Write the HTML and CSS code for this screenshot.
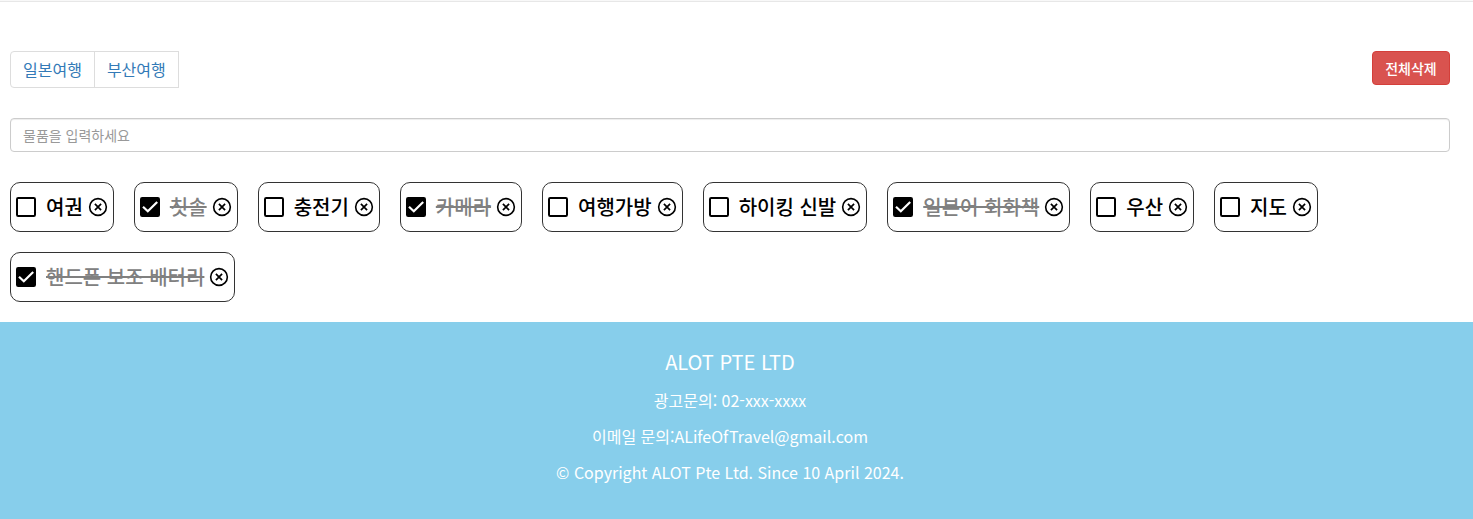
FILE: index.html
```html
<!DOCTYPE html>
<html lang="ko">
<head>
<meta charset="utf-8">
<title>ALOT</title>
<link rel="stylesheet" href="styles.css">
</head>
<body>
<svg class="defs" width="0" height="0">
<symbol id="box" viewBox="0 0 20 20"><rect x="1" y="1" width="18" height="18" rx="1.200" fill="none" stroke="#000" stroke-width="2"/></symbol>
<symbol id="checked" viewBox="0 0 20 20"><rect width="20" height="20" rx="2.200"/><path d="M3 9.800L7.800 14.300L17.200 5" fill="none" stroke="#fff" stroke-width="2.200"/></symbol>
<symbol id="remove" viewBox="0 0 20 20"><circle cx="10" cy="10" r="8.350" fill="none" stroke="#000" stroke-width="1.600"/><path d="M6.900 6.900l6.200 6.200M13.100 6.900l-6.200 6.200" fill="none" stroke="#000" stroke-width="1.700"/></symbol>
</svg>
<header class="top-line"></header>
<main class="content">
<div class="toolbar">
<nav class="tabs"><a class="tab">일본여행</a><a class="tab">부산여행</a></nav>
<button class="delete-all">전체삭제</button>
</div>
<input class="item-input" type="text" placeholder="물품을 입력하세요">
<ul class="items">
<li class="item"><svg class="check"><use href="#box"/></svg><span class="label">여권</span><svg class="remove"><use href="#remove"/></svg></li>
<li class="item done"><svg class="check"><use href="#checked"/></svg><span class="label">칫솔</span><svg class="remove"><use href="#remove"/></svg></li>
<li class="item"><svg class="check"><use href="#box"/></svg><span class="label">충전기</span><svg class="remove"><use href="#remove"/></svg></li>
<li class="item done"><svg class="check"><use href="#checked"/></svg><span class="label">카메라</span><svg class="remove"><use href="#remove"/></svg></li>
<li class="item"><svg class="check"><use href="#box"/></svg><span class="label">여행가방</span><svg class="remove"><use href="#remove"/></svg></li>
<li class="item"><svg class="check"><use href="#box"/></svg><span class="label">하이킹 신발</span><svg class="remove"><use href="#remove"/></svg></li>
<li class="item done"><svg class="check"><use href="#checked"/></svg><span class="label">일본어 회화책</span><svg class="remove"><use href="#remove"/></svg></li>
<li class="item"><svg class="check"><use href="#box"/></svg><span class="label">우산</span><svg class="remove"><use href="#remove"/></svg></li>
<li class="item"><svg class="check"><use href="#box"/></svg><span class="label">지도</span><svg class="remove"><use href="#remove"/></svg></li>
<li class="item done"><svg class="check"><use href="#checked"/></svg><span class="label">핸드폰 보조 배터리</span><svg class="remove"><use href="#remove"/></svg></li>
</ul>
</main>
<footer class="footer">
<h2 class="company">ALOT PTE LTD</h2>
<p class="line">광고문의: 02-xxx-xxxx</p>
<p class="line">이메일 문의:ALifeOfTravel@gmail.com</p>
<p class="line">© Copyright ALOT Pte Ltd. Since 10 April 2024.</p>
</footer>
</body>
</html>
```
FILE: styles.css
```css
* { box-sizing: border-box; }
body { margin: 0; font-family: "Noto Sans CJK KR", sans-serif; background: #fff; color: #000; height: 519px; display: flex; flex-direction: column; overflow: hidden; }
.defs { display: none; }
.top-line { height: 2px; flex: none; background: #f8f8f8; border-bottom: 1px solid #e7e7e7; }
.content { padding: 49px 23px 20px 10px; }
.toolbar { display: flex; justify-content: space-between; align-items: flex-start; height: 67px; }
.tabs { display: flex; }
.tab { border: 1px solid #ddd; height: 37px; padding: 0 12px; line-height: 35px; font-size: 16px; color: #337ab7; }
.tab:first-child { border-radius: 4px 0 0 4px; }
.tab + .tab { margin-left: -1px; }
.delete-all { width: 78px; height: 34px; padding: 0; border: 1px solid #d43f3a; border-radius: 4px; background: #d9534f; color: #fff; font: 500 14px "Noto Sans CJK KR", sans-serif; }
.item-input { display: block; width: 100%; height: 34px; padding: 6px 12px; border: 1px solid #ccc; border-radius: 4px; font: 14px "Noto Sans CJK KR", sans-serif; box-shadow: inset 0 1px 1px rgba(0,0,0,.075); }
.item-input::placeholder { color: #999; }
.items { display: flex; flex-wrap: wrap; gap: 20px; margin: 30px 0 0; padding: 0; list-style: none; }
.item { display: flex; align-items: center; height: 50px; padding: 0 5px; border: 1px solid #333; border-radius: 10px; }
.check { width: 20px; height: 20px; }
.label { margin: 0 5px 0 10px; font-size: 20px; font-weight: 500; line-height: 30px; white-space: nowrap; }
.done .label { color: gray; text-decoration: line-through; }
.remove { width: 20px; height: 20px; }
.footer { flex: 1; padding: 26px 13px 0 0; background: #87ceeb; color: #fff; text-align: center; }
.company { margin: 0 0 12px; font-size: 20px; font-weight: 400; line-height: 28px; }
.line { margin: 0 0 12px; font-size: 16px; line-height: 24px; }
```
